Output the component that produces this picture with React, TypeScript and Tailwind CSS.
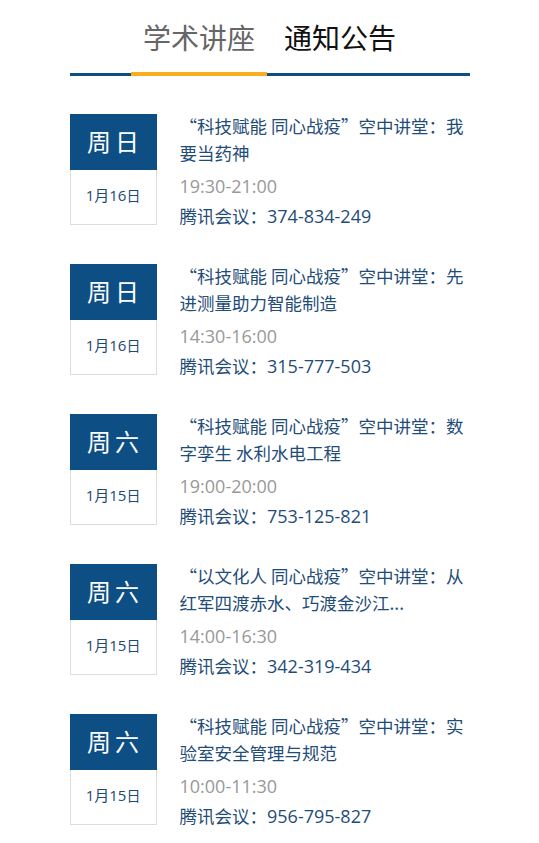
import React from "react";

const items = [
  { wd: "周日", m: "1", d: "16", title: "“科技赋能 同心战疫”空中讲堂：我要当药神", time: "19:30-21:00", meet: "374-834-249" },
  { wd: "周日", m: "1", d: "16", title: "“科技赋能 同心战疫”空中讲堂：先进测量助力智能制造", time: "14:30-16:00", meet: "315-777-503" },
  { wd: "周六", m: "1", d: "15", title: "“科技赋能 同心战疫”空中讲堂：数字孪生 水利水电工程", time: "19:00-20:00", meet: "753-125-821" },
  { wd: "周六", m: "1", d: "15", title: "“以文化人 同心战疫”空中讲堂：从红军四渡赤水、巧渡金沙江...", time: "14:00-16:30", meet: "342-319-434" },
  { wd: "周六", m: "1", d: "15", title: "“科技赋能 同心战疫”空中讲堂：实验室安全管理与规范", time: "10:00-11:30", meet: "956-795-827" },
];

const latin = { fontFamily: '"Open Sans", "Noto Sans CJK SC", sans-serif' };

export default function App() {
  return (
    <div
      className="w-[539px] h-[843px] bg-white overflow-hidden"
      style={{ fontFamily: '"Noto Sans CJK SC", "Noto Sans", sans-serif' }}
    >
      <div className="w-[400px] mx-auto">
        <div className="flex justify-center gap-[5px] pt-[15px] border-b-[3px] border-[#0d4f85]">
          <div className="px-[12px] text-[28px] leading-[44px] text-[#666666] pb-[13px] border-b-[4px] border-[#f9ae1e] -mb-[3px]">
            学术讲座
          </div>
          <div className="px-[12px] text-[28px] leading-[44px] text-[#111111] pb-[13px]">
            通知公告
          </div>
        </div>
        <div className="flex flex-col gap-[39px] pt-[38px]">
          {items.map((it, i) => (
            <div key={i} className="flex h-[111px]">
              <div className="w-[87px] h-[111px] shrink-0 border border-[#dddddd] flex flex-col">
                <div className="h-[56px] -mt-px -mx-px bg-[#0d4f85] text-white flex items-center justify-center text-[24px] tracking-[4px] pl-[4px] pb-[2px]">
                  {it.wd}
                </div>
                <div className="flex-1 flex items-center justify-center text-[15px] text-[#1b4a72] pb-[4px]">
                  <span style={latin}>{it.m}</span>月<span style={latin}>{it.d}</span>
                  <span className="text-[14px]">日</span>
                </div>
              </div>
              <div className="ml-[23px] w-[290px] -mt-[2px]">
                <div className="text-[17.5px] leading-[27px] text-[#1f4d78] line-clamp-2">{it.title}</div>
                <div className="text-[18px] leading-[30px] mt-[5px] text-[#999999]" style={latin}>
                  {it.time}
                </div>
                <div className="text-[17.5px] leading-[30px] text-[#1f4d78]">
                  腾讯会议：<span className="text-[18px]" style={latin}>{it.meet}</span>
                </div>
              </div>
            </div>
          ))}
        </div>
      </div>
    </div>
  );
}
